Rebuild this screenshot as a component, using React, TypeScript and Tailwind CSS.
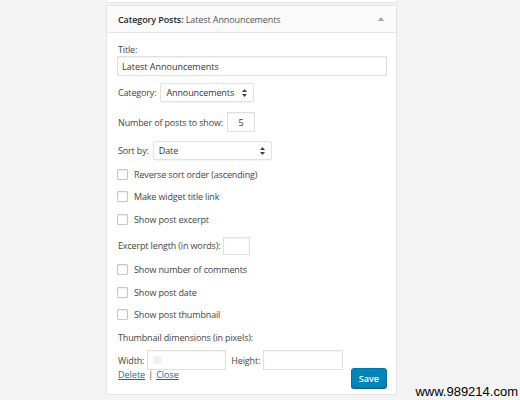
const labelCls = "text-[9px] tracking-[-0.15px] text-[#444] leading-none";

function Check({ label }: { label: string }) {
  return (
    <label className="flex items-center h-[22.5px]">
      <span className="w-[11px] h-[11px] border border-[#c4c8cc] rounded-[1px] bg-white shadow-[inset_0_1px_2px_rgba(0,0,0,0.08)]" />
      <span className={`${labelCls} ml-[6px]`}>{label}</span>
    </label>
  );
}

function SelectBox({ value, width }: { value: string; width: number }) {
  return (
    <div
      className="flex items-center justify-between h-[19px] pl-[5px] pr-[6px] border border-[#e2e2e2] rounded-[2px] bg-white shadow-[0_1px_1px_rgba(0,0,0,0.05)]"
      style={{ width }}
    >
      <span className="text-[9px] tracking-[-0.1px] text-[#32373c] leading-none">{value}</span>
      <svg width="5" height="8" viewBox="0 0 5 8">
        <path d="M2.5 0 L5 3 L0 3 Z M2.5 8 L5 5 L0 5 Z" fill="#444" />
      </svg>
    </div>
  );
}

function TextBox({ value, className, children }: { value?: string; className: string; children?: React.ReactNode }) {
  return (
    <div
      className={`flex items-center border border-[#e0e0e0] bg-white shadow-[inset_0_1px_2px_rgba(0,0,0,0.06)] ${className}`}
    >
      {value && <span className="text-[9px] text-[#32373c] leading-none">{value}</span>}
      {children}
    </div>
  );
}

export default function App() {
  return (
    <div
      className="relative w-[520px] h-[400px] bg-[#f3f3f3] overflow-hidden"
      style={{ fontFamily: '"Open Sans", "Noto Sans", sans-serif' }}
    >
      <div className="ml-[106px] w-[291px] flex flex-col">
        {/* bottom of previous widget */}
        <div className="h-[3px] bg-white border-x border-b border-[#e6e6e6]" />

        {/* widget header */}
        <div className="mt-[2px] h-[28px] flex items-center justify-between pl-[11px] pr-[12px] bg-[#fafafa] border border-[#e5e5e5]">
          <span className="text-[9px] tracking-[-0.1px] text-[#23282d] leading-none">
            <span className="font-semibold">Category Posts:</span>{" "}
            <span className="text-[#555]">Latest Announcements</span>
          </span>
          <svg width="6" height="4" viewBox="0 0 6 4">
            <path d="M3 0 L6 4 L0 4 Z" fill="#a0a5aa" />
          </svg>
        </div>

        {/* widget body */}
        <div className="bg-white border-x border-b border-[#e5e5e5] pl-[10px] pr-[9px] pt-[12px] pb-[6px]">
          <div className={`${labelCls} pl-[1px]`}>Title:</div>
          <TextBox value="Latest Announcements" className="mt-[2px] h-[20px] pl-[4px]" />

          <div className="flex items-center mt-[7px]">
            <span className={`${labelCls} pl-[1px]`}>Category:</span>
            <div className="ml-[4px]">
              <SelectBox value="Announcements" width={94} />
            </div>
          </div>

          <div className="flex items-center mt-[10px]">
            <span className={`${labelCls} pl-[1px]`}>Number of posts to show:</span>
            <TextBox value="5" className="ml-[4px] w-[28px] h-[20px] justify-center" />
          </div>

          <div className="flex items-center mt-[9px]">
            <span className={`${labelCls} pl-[1px]`}>Sort by:</span>
            <div className="ml-[4px]">
              <SelectBox value="Date" width={119} />
            </div>
          </div>

          <div className="mt-[3px]">
            <Check label="Reverse sort order (ascending)" />
            <Check label="Make widget title link" />
            <Check label="Show post excerpt" />
          </div>

          <div className="flex items-center mt-[6px]">
            <span className={`${labelCls} pl-[1px]`}>Excerpt length (in words):</span>
            <TextBox className="ml-[3px] w-[27px] h-[18px]" />
          </div>

          <div className="mt-[4px]">
            <Check label="Show number of comments" />
            <Check label="Show post date" />
            <Check label="Show post thumbnail" />
          </div>

          <div className={`${labelCls} pl-[1px] mt-[7px]`}>Thumbnail dimensions (in pixels):</div>
          <div className="flex items-center mt-[8px]">
            <span className={`${labelCls} pl-[1px]`}>Width:</span>
            <TextBox className="ml-[3px] w-[79px] h-[20px] pl-[5px]">
              <span className="w-[8px] h-[8px] bg-[#f1f1f1]" />
            </TextBox>
            <span className={`${labelCls} ml-[5px]`}>Height:</span>
            <TextBox className="ml-[3px] w-[80px] h-[20px]" />
          </div>

          <div className="flex items-start justify-between -mt-[2px]">
            <div className="pt-[2px] pl-[1px] text-[9px] leading-none">
              <a className="text-[#0073aa] underline">Delete</a>
              <span className="text-[#555] mx-[3px]">|</span>
              <a className="text-[#0073aa] underline">Close</a>
            </div>
            <button className="h-[20px] px-[7px] rounded-[3px] bg-[#0085ba] border border-[#0073aa] text-white text-[9px] font-semibold leading-none shadow-[0_1px_0_#006799]">
              Save
            </button>
          </div>
        </div>
      </div>

      <div
        className="absolute right-[2px] bottom-[2px] text-[13px] leading-none text-black"
        style={{ fontFamily: '"Liberation Sans", Arial, sans-serif' }}
      >
        www.989214.com
      </div>
    </div>
  );
}
